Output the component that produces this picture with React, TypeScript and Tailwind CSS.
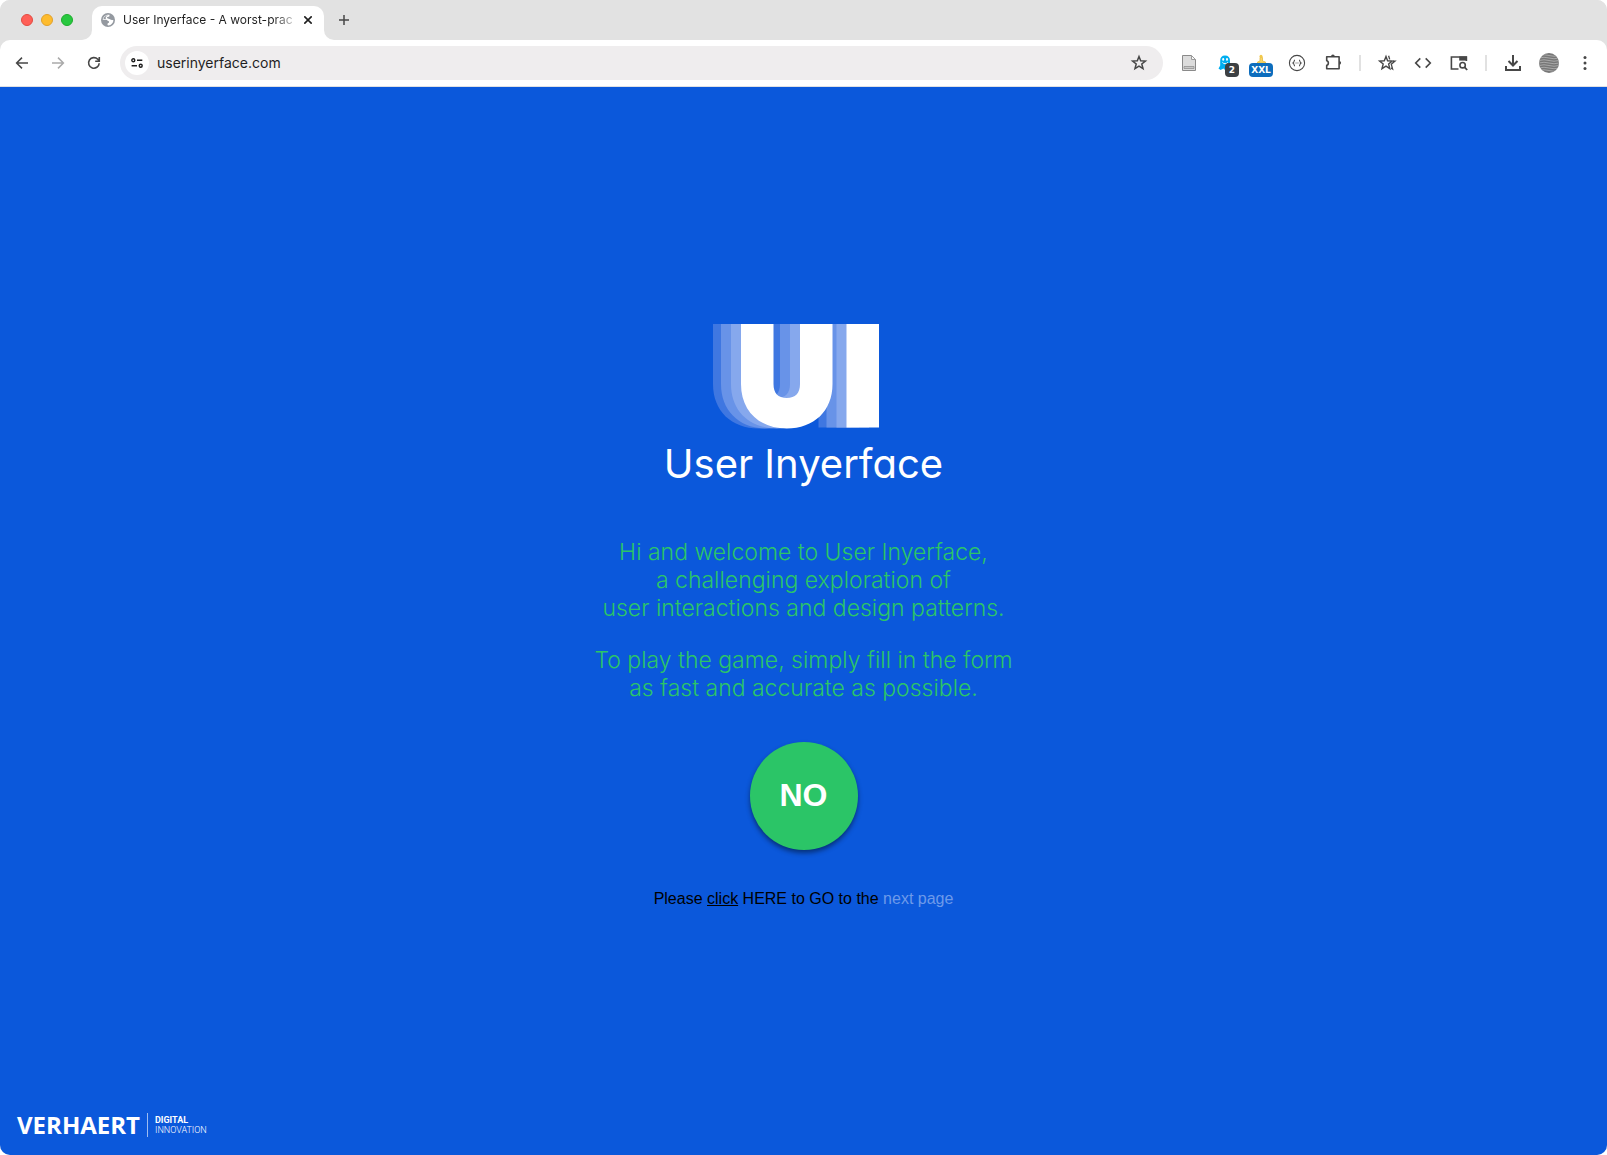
import React from "react";

type IconProps = { children: React.ReactNode; className?: string };

function Icon({ children, className = "" }: IconProps) {
  return (
    <svg
      viewBox="0 0 20 20"
      className={`size-5 ${className}`}
      fill="none"
      stroke="currentColor"
      strokeWidth="1.6"
      aria-hidden="true"
    >
      {children}
    </svg>
  );
}

function ToolButton({ label, children }: { label: string; children: React.ReactNode }) {
  return (
    <button
      type="button"
      aria-label={label}
      className="relative flex size-9 shrink-0 items-center justify-center text-[#474747]"
    >
      {children}
    </button>
  );
}

function Separator() {
  return (
    <div className="flex w-[18px] shrink-0 justify-center">
      <div className="h-4 w-0.5 bg-[#e1e1e1]" />
    </div>
  );
}

function TabStrip() {
  return (
    <div className="flex h-10 items-end bg-[#e2e2e2] pl-[21px]">
      <div className="flex h-10 items-center gap-2">
        <button type="button" aria-label="Close window" className="size-3 rounded-full border border-[#e24b41] bg-[#ff5f57]" />
        <button type="button" aria-label="Minimize window" className="size-3 rounded-full border border-[#e1a12b] bg-[#febc2e]" />
        <button type="button" aria-label="Zoom window" className="size-3 rounded-full border border-[#1dad2c] bg-[#28c840]" />
      </div>
      <svg viewBox="0 0 10 10" className="ml-[9px] size-2.5 text-white" aria-hidden="true">
        <path d="M10 0V10H0A10 10 0 0 0 10 0Z" fill="currentColor" />
      </svg>
      <div className="flex h-[34px] w-[232px] items-center rounded-t-[10px] bg-white pr-2 pb-1.5 pl-2">
        <svg viewBox="0 0 14 14" className="ml-px size-3.5 shrink-0" aria-hidden="true">
          <circle cx="7" cy="7" r="7" fill="#9499a0" />
          <path
            d="M8.400 1.700C8.800 3 8.400 3.700 7.200 3.800C6 3.900 5.700 4.600 6.300 5.200C7 5.900 8.300 5.500 9 6.300C9.700 7 10.700 7.300 12.300 6.900C12.500 9.500 10.400 12.100 7.300 12.400C6.600 12.400 6.400 11.700 6.500 11C6.600 10.200 7.100 10.200 7.800 9.700C8.500 9.200 8.100 8.300 7.200 8.100C6.300 7.900 6.300 6.900 5.200 6.800L1.700 6.700C1.900 4 4.600 1.300 8.400 1.700Z"
            fill="#ffffff"
          />
          <path d="M2.400 5.900C2.900 4 4.700 2.600 6.700 2.300C6.900 2.900 5 3.200 4.700 4.500C4.500 5.600 5.300 6 4.800 6.100Z" fill="#9499a0" />
        </svg>
        <div className="ml-2 min-w-0 flex-1 whitespace-nowrap bg-linear-to-r from-[#1f1f1f] from-85% to-transparent bg-clip-text text-xs text-transparent">
          User Inyerface - A worst-prac
        </div>
        <button type="button" aria-label="Close tab" className="flex size-4 shrink-0 items-center justify-center text-[#1f1f1f]">
          <svg viewBox="0 0 8 8" className="size-2" stroke="currentColor" strokeWidth="1.6" aria-hidden="true">
            <path d="M0.3 0.3L7.7 7.7M7.7 0.3L0.3 7.7" />
          </svg>
        </button>
      </div>
      <svg viewBox="0 0 10 10" className="size-2.5 text-white" aria-hidden="true">
        <path d="M0 0V10H10A10 10 0 0 1 0 0Z" fill="currentColor" />
      </svg>
      <button type="button" aria-label="New tab" className="flex h-10 w-5 items-center justify-center text-[#474747]">
        <svg viewBox="0 0 10 10" className="size-2.5" stroke="currentColor" strokeWidth="1.5" aria-hidden="true">
          <path d="M5 0V10M0 5H10" />
        </svg>
      </button>
    </div>
  );
}

function AddressBar() {
  return (
    <div className="flex h-[34px] min-w-0 flex-1 items-center rounded-full bg-[#efedee] pr-3.5 pl-[5px]">
      <button
        type="button"
        aria-label="View site information"
        className="flex size-6 shrink-0 items-center justify-center rounded-full bg-white text-[#1f1f1f]"
      >
        <svg viewBox="0 0 12 10" className="h-2.5 w-3" fill="none" stroke="currentColor" strokeWidth="1.4" aria-hidden="true">
          <circle cx="2.3" cy="2.2" r="1.5" />
          <path d="M6 2.2H11.3M0.6 7.8H6" />
          <circle cx="9.7" cy="7.8" r="1.5" />
        </svg>
      </button>
      <input
        type="text"
        aria-label="Address"
        defaultValue="userinyerface.com"
        className="ml-2 min-w-0 flex-1 bg-transparent text-sm text-[#1f1f1f] outline-none"
      />
      <button type="button" aria-label="Bookmark this tab" className="text-[#474747]">
        <Icon>
          <path d="M10 3.5L11.7 7.8L16.4 8.1L12.8 11L14 15.6L10 13.1L6 15.6L7.2 11L3.6 8.1L8.3 7.8Z" strokeWidth="1.5" />
        </Icon>
      </button>
    </div>
  );
}

function Toolbar() {
  return (
    <div className="rounded-t-[10px] border-b border-[#dfe0e4] bg-white">
      <div className="flex h-[46px] items-center px-1">
        <ToolButton label="Back">
          <Icon>
            <path d="M16 10H4.8M10 4.6L4.6 10L10 15.4" strokeWidth="1.5" />
          </Icon>
        </ToolButton>
        <ToolButton label="Forward">
          <Icon className="text-[#aaaaaa]">
            <path d="M4 10H15.2M10 4.6L15.4 10L10 15.4" strokeWidth="1.5" />
          </Icon>
        </ToolButton>
        <ToolButton label="Reload">
          <Icon>
            <path d="M15.2 10.2A5.3 5.3 0 1 1 13.8 6.3L15.2 7.8M15.3 4V8.2H11.2" strokeWidth="1.6" />
          </Icon>
        </ToolButton>
        <div className="ml-2 flex min-w-0 flex-1">
          <AddressBar />
        </div>
        <div className="ml-2 flex shrink-0 items-center">
          <ToolButton label="Reader extension">
            <svg viewBox="0 0 16 18" className="h-[18px] w-4" aria-hidden="true">
              <path d="M1.5 1.5H10.5L14.5 5.5V16.5H1.5Z" fill="#dcdcdc" stroke="#8a8a8a" />
              <path d="M10.5 1.5V5.5H14.5Z" fill="#f7f7f7" stroke="#9c9c9c" />
              <path d="M3 12.5H13V14.5H3Z" fill="#c8c8c8" stroke="#8a8a8a" strokeWidth="0.7" />
            </svg>
          </ToolButton>
          <ToolButton label="Tracker blocker, 2 found">
            <svg viewBox="0 0 14 16" className="size-4" aria-hidden="true">
              <path d="M7 0.500C10.300 0.500 12 2.600 12 5.600V10L13 15L9.500 13.500L7.500 15.500L5.500 13.500L2.500 15L0.500 13.500L2.200 10.500V5.600C2.200 2.600 3.800 0.500 7 0.500Z" fill="#00aef0" />
              <ellipse cx="5.200" cy="4.400" rx="1" ry="1.400" fill="#ffffff" />
              <ellipse cx="9" cy="4.400" rx="1" ry="1.400" fill="#ffffff" />
              <path d="M4.400 7.300C5.500 9.200 8.700 9.200 9.800 7.300" fill="none" stroke="#ffffff" />
            </svg>
            <span className="absolute top-[18px] left-[18px] flex size-3.5 items-center justify-center rounded-[4px] bg-[#3c4043] font-['DejaVu_Sans',sans-serif] text-[9px] leading-none font-bold text-white">
              2
            </span>
          </ToolButton>
          <ToolButton label="Size extension, XXL">
            <svg viewBox="0 0 10 10" className="mb-2 size-2.5" aria-hidden="true">
              <path d="M1.500 9H9.500V8L6.500 7V3.500H4V7L1.500 8Z" fill="#f6d66b" stroke="#e9b93c" strokeWidth="0.800" />
              <circle cx="5" cy="2.200" r="1.500" fill="#f2c94c" />
            </svg>
            <span className="absolute top-[18px] left-1.5 flex h-3.5 w-6 items-center justify-center rounded-[4px] bg-[#0d6dbd] font-['DejaVu_Sans',sans-serif] text-[9px] leading-none font-bold text-white">
              XXL
            </span>
          </ToolButton>
          <ToolButton label="JSON extension">
            <Icon>
              <circle cx="10" cy="10" r="7.6" strokeWidth="1.1" />
              <path
                d="M8 7C6.700 7 7.500 9.400 6 10C7.500 10.600 6.700 13 8 13M12 7C13.300 7 12.500 9.400 14 10C12.500 10.600 13.300 13 12 13"
                strokeWidth="1.1"
              />
              <path d="M8.6 10H9.5M10.5 10H11.4" strokeWidth="1.1" />
            </Icon>
          </ToolButton>
          <ToolButton label="Extensions">
            <Icon>
              <path
                d="M3.7 3.8H16.1V15.8H3.700V12.4C5.900 12.2 5.900 7.9 3.700 7.7Z"
                strokeLinejoin="round"
              />
              <path d="M8 3.800A1.900 2.200 0 0 1 11.800 3.800ZM16.100 7.900A2 1.900 0 0 1 16.100 11.700Z" fill="currentColor" stroke="none" />
            </Icon>
          </ToolButton>
          <Separator />
          <ToolButton label="Bookmarks">
            <Icon>
              <path d="M9 3.5L10.6 7.8L15.2 8.1L11.6 11L12.8 15.6L9 13.1L5 15.6L6.2 11L2.6 8.1L7.3 7.8Z" strokeWidth="1.4" />
              <path d="M11.6 2.8L12.7 6.4M16 8.1H18L14.3 11.3L15.6 16L14 15" strokeWidth="1.3" />
            </Icon>
          </ToolButton>
          <ToolButton label="Developer tools">
            <Icon>
              <path d="M7.3 5.4L2.7 10L7.3 14.6M12.7 5.4L17.3 10L12.7 14.6" />
            </Icon>
          </ToolButton>
          <ToolButton label="Search tabs">
            <Icon>
              <path d="M9.5 16H2.4V4H17.4V8" />
              <path d="M10.2 3.4H18V7.6H10.2Z" fill="currentColor" stroke="none" />
              <circle cx="13.6" cy="12.2" r="2.7" />
              <path d="M15.5 14.2L18.2 17" strokeWidth="1.8" />
            </Icon>
          </ToolButton>
          <Separator />
          <ToolButton label="Downloads">
            <Icon>
              <path d="M10 2V12M5.5 8L10 12.5L14.5 8" strokeWidth="2" />
              <path d="M3 13V17H17V13" strokeWidth="2" />
            </Icon>
          </ToolButton>
          <ToolButton label="Profile">
            <svg viewBox="0 0 20 20" className="size-5" aria-hidden="true">
              <defs>
                <clipPath id="avatar">
                  <circle cx="10" cy="10" r="10" />
                </clipPath>
              </defs>
              <g clipPath="url(#avatar)" fill="none">
                <path d="M0 0H20V20H0Z" fill="#777777" />
                <path
                  d="M0 2.5Q5 1 10 2.5T20 2.5M0 5Q5 3.5 10 5T20 5M0 7.5Q5 6 10 7.5T20 7.5M0 10Q5 8.5 10 10T20 10M0 12.5Q5 11 10 12.5T20 12.5M0 15Q5 13.5 10 15T20 15M0 17.5Q5 16 10 17.5T20 17.5"
                  stroke="#a8a8a8"
                />
              </g>
            </svg>
          </ToolButton>
          <ToolButton label="Menu">
            <Icon>
              <g fill="currentColor" stroke="none">
                <circle cx="10" cy="4.5" r="1.5" />
                <circle cx="10" cy="10" r="1.5" />
                <circle cx="10" cy="15.5" r="1.5" />
              </g>
            </Icon>
          </ToolButton>
        </div>
      </div>
    </div>
  );
}

const U_SHAPE =
  "M28 0H60.500V60C60.500 69 65 74 73.700 74C82.500 74 87 69 87 60V0H119.500V60C119.500 87 101 104.500 73.700 104.500C46.500 104.500 28 87 28 60Z";

function Logo() {
  const layers = [
    { shift: -28, color: "#3f77e1" },
    { shift: -20, color: "#6893e8" },
    { shift: -10, color: "#86a8ed" },
    { shift: 0, color: "#ffffff" },
  ];
  return (
    <svg viewBox="0 0 182 105" className="h-[105px] w-[182px]" role="img" aria-label="UI">
      {layers.map((layer) => (
        <g key={layer.shift} fill={layer.color} transform={`translate(${layer.shift} 0)`}>
          <path d={U_SHAPE} />
          <path d="M133.500 0H166V103.500H133.500Z" />
        </g>
      ))}
    </svg>
  );
}

export default function App() {
  return (
    <div className="bg-white font-['Inter',sans-serif]">
      <div className="flex min-h-screen flex-col overflow-hidden rounded-[10px] bg-[#e2e2e2]">
        <TabStrip />
        <Toolbar />
        <div className="flex flex-1 flex-col bg-[#0b58db]">
          <main className="flex flex-1 flex-col items-center pt-[237px] text-center">
            <Logo />
            <h1 className="mt-[9px] text-[40px] leading-[52px] text-white [font-feature-settings:'cv11']">
              User Inyerface
            </h1>
            <div className="mt-12 space-y-6 text-[23px] leading-7 font-light text-[#2bc567]">
              <p>
                Hi and welcome to User Inyerface,
                <br />a challenging exploration of
                <br />
                user interactions and design patterns.
              </p>
              <p>
                To play the game, simply fill in the form
                <br />
                as fast and accurate as possible.
              </p>
            </div>
            <button
              type="button"
              className="mt-10 flex size-[108px] items-center justify-center rounded-full bg-[#2bc567] pb-0.5 font-['Liberation_Sans',sans-serif] text-[32px] font-bold text-white shadow-[0_3px_5px_rgba(0,0,0,0.45)]"
            >
              NO
            </button>
            <p className="mt-[37px] font-['Liberation_Sans',sans-serif] text-base leading-6 text-black">
              Please <span className="underline">click</span> HERE to GO to the{" "}
              <a href="#next" className="text-[#6d9aea]">
                next page
              </a>
            </p>
          </main>
          <footer className="flex px-[17px] pb-[18px]">
            <a href="#verhaert" className="flex items-center text-white">
              <span className="font-['Open_Sans',sans-serif] text-2xl leading-6 font-bold">VERHAERT</span>
              <span className="ml-[7px] h-6 w-px bg-[#9dbcf1]" />
              <span className="ml-[7px] flex flex-col font-['Roboto',sans-serif] text-[9px] leading-[10px]">
                <span className="font-bold">DIGITAL</span>
                <span className="font-light">INNOVATION</span>
              </span>
            </a>
          </footer>
        </div>
      </div>
    </div>
  );
}
